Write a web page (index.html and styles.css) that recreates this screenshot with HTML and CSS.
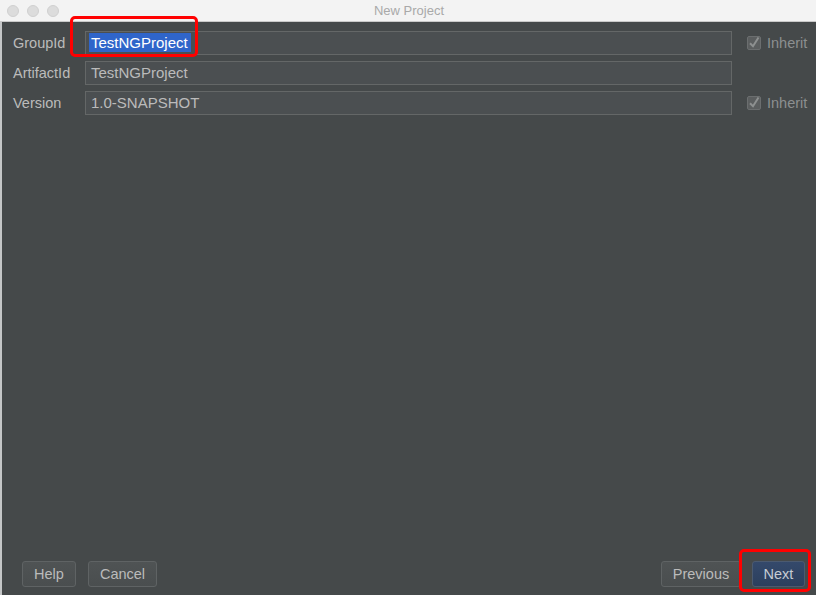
FILE: index.html
```html
<!DOCTYPE html>
<html>
<head>
<meta charset="utf-8">
<link rel="stylesheet" href="styles.css">
</head>
<body>
<div class="window">
  <div class="titlebar">
    <div class="lights">
      <span class="light"></span><span class="light"></span><span class="light"></span>
    </div>
    <div class="title">New Project</div>
  </div>
  <div class="content">
    <div class="form">
      <label class="lbl">GroupId</label>
      <div class="field"><span class="sel">TestNGProject</span></div>
      <div class="inherit">
        <svg class="cb" width="14" height="14" viewBox="0 0 14 14"><rect x="0.5" y="0.5" width="13" height="13" rx="1.5" fill="#5b5e5f" stroke="#6b6e6f"/><path d="M3 7.2 L6 10.2 L11.5 1.5" fill="none" stroke="#8d9090" stroke-width="2"/></svg>
        <span>Inherit</span>
      </div>
      <label class="lbl">ArtifactId</label>
      <div class="field">TestNGProject</div>
      <div></div>
      <label class="lbl">Version</label>
      <div class="field">1.0-SNAPSHOT</div>
      <div class="inherit">
        <svg class="cb" width="14" height="14" viewBox="0 0 14 14"><rect x="0.5" y="0.5" width="13" height="13" rx="1.5" fill="#5b5e5f" stroke="#6b6e6f"/><path d="M3 7.2 L6 10.2 L11.5 1.5" fill="none" stroke="#8d9090" stroke-width="2"/></svg>
        <span>Inherit</span>
      </div>
    </div>
    <div class="footer">
      <div class="group">
        <button class="btn help">Help</button>
        <button class="btn cancel">Cancel</button>
      </div>
      <div class="group right">
        <button class="btn prev">Previous</button>
        <button class="btn next">Next</button>
      </div>
    </div>
  </div>
  <div class="mark mark-group"></div>
  <div class="mark mark-next"></div>
</div>
</body>
</html>
```
FILE: styles.css
```css
* { box-sizing: border-box; }
html, body { margin: 0; padding: 0; }
body {
  width: 816px;
  height: 595px;
  overflow: hidden;
  font-family: "Liberation Sans", Arial, sans-serif;
  background: #45494a;
}
.window {
  position: relative;
  width: 816px;
  height: 595px;
  display: flex;
  flex-direction: column;
}
.titlebar {
  height: 22px;
  flex: none;
  background: #f3f3f3;
  border-bottom: 1px solid #c9c9c9;
  display: flex;
  align-items: center;
  position: relative;
}
.lights {
  display: flex;
  gap: 8px;
  padding-left: 7px;
}
.light {
  width: 12px;
  height: 12px;
  border-radius: 50%;
  background: #dcdcdc;
  border: 1px solid #d0d0d0;
}
.title {
  position: absolute;
  left: 0;
  right: 0;
  top: 3px;
  text-align: center;
  font-size: 13px;
  color: #a9a9a9;
  padding-left: 2px;
}
.content {
  flex: 1;
  display: flex;
  flex-direction: column;
  background: #45494a;
  border-left: 2px solid #c4c6c7;
}
.form {
  display: grid;
  grid-template-columns: 72px 647px auto;
  column-gap: 0;
  row-gap: 6px;
  padding: 9px 0 0 11px;
  align-items: center;
}
.lbl {
  font-size: 14.5px;
  color: #bbbbbb;
  line-height: 24px;
}
.field {
  height: 24px;
  background: #4b4f51;
  border: 1px solid #646767;
  color: #bbbbbb;
  font-size: 15px;
  line-height: 22px;
  padding-left: 5px;
  white-space: nowrap;
}
.sel {
  background: #2f65ca;
  color: #ffffff;
  display: inline-block;
  line-height: 19px;
  padding: 0 3px 0 2px;
  margin-left: -2px;
}
.inherit {
  display: flex;
  align-items: center;
  gap: 6px;
  padding-left: 15px;
  color: #8c8f90;
  font-size: 14.5px;
}
.cb { display: block; }
.footer {
  margin-top: auto;
  display: flex;
  justify-content: space-between;
  padding: 0 11px 8px 20px;
}
.group { display: flex; gap: 12px; }
.group.right { gap: 11px; }
.btn {
  height: 26px;
  font-family: "Liberation Sans", Arial, sans-serif;
  font-size: 14.5px;
  color: #bbbbbb;
  background: linear-gradient(#4f5354, #4a4e4f);
  border: 1px solid #5f6364;
  border-radius: 3px;
  padding: 0;
}
.help { width: 54px; }
.cancel { width: 69px; }
.prev { width: 80px; }
.next {
  width: 53px;
  background: linear-gradient(#34496b, #2c3f5d);
  border-color: #4b5a70;
  color: #c6ccd4;
}
.mark {
  position: absolute;
  border: 3px solid #ff0000;
  border-radius: 5px;
}
.mark-group { left: 70px; top: 16px; width: 128px; height: 41px; }
.mark-next { left: 739px; top: 549px; width: 72px; height: 43px; }
```
